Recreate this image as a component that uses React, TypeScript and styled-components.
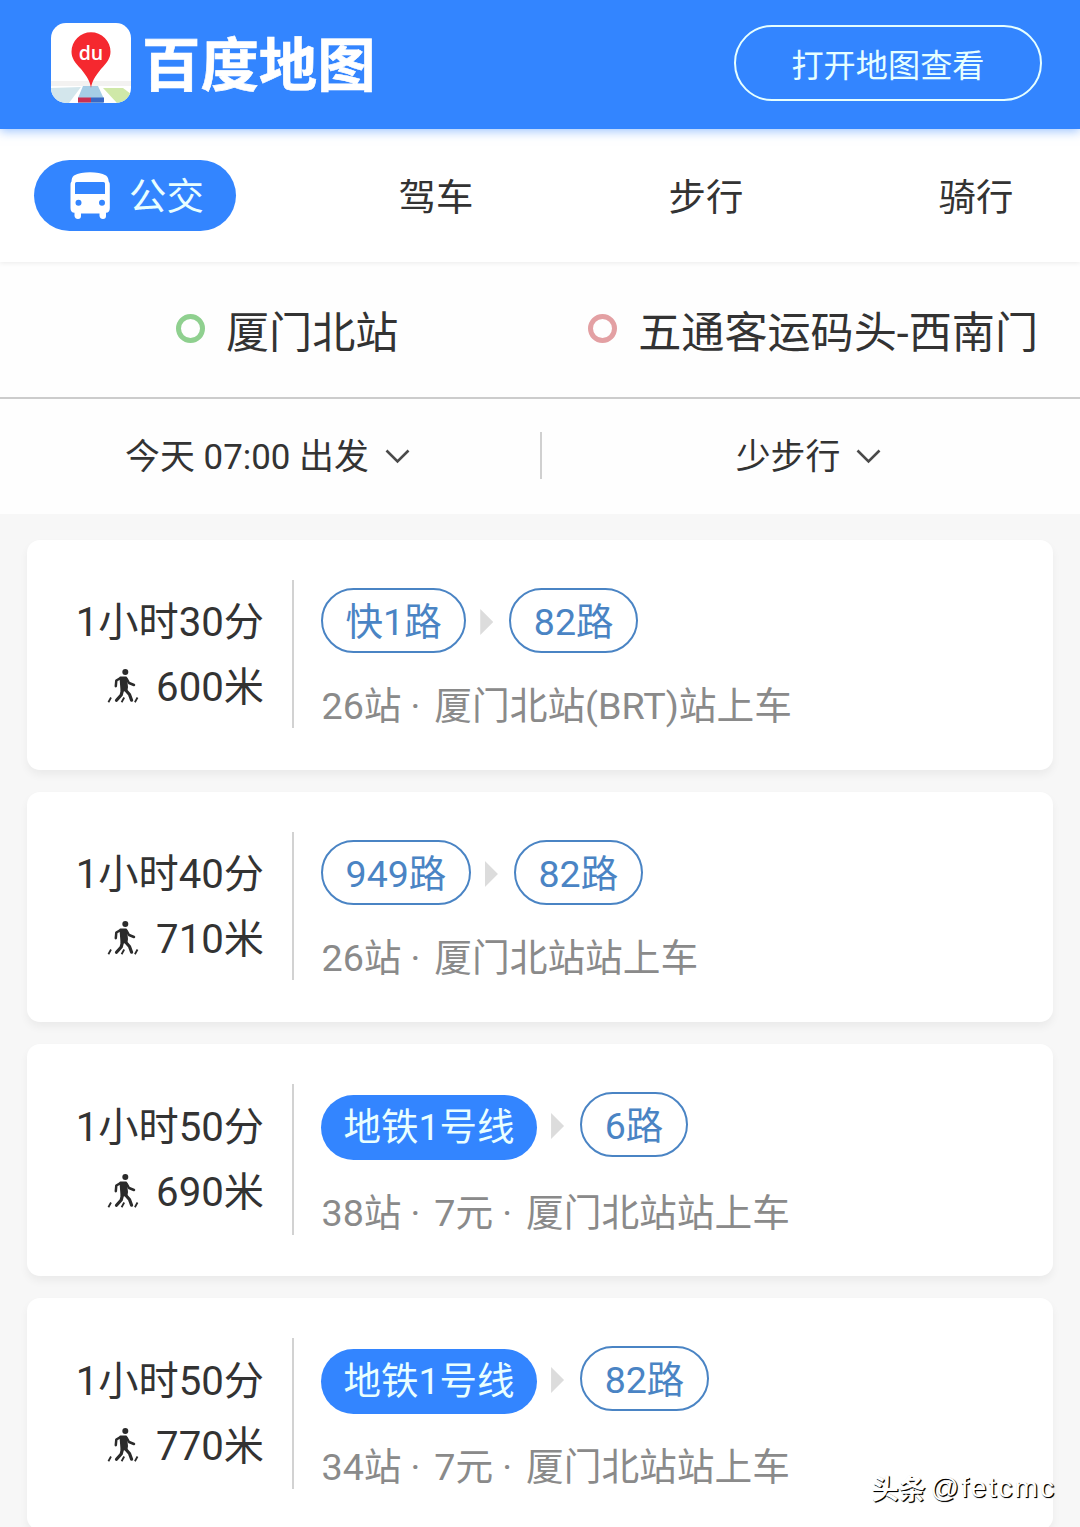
import React from 'react';
import styled, { createGlobalStyle, css } from 'styled-components';

const BLUE = '#3385ff';
const LINE_BLUE = '#4a84c4';

const GlobalStyle = createGlobalStyle`
  * { box-sizing: border-box; }
  body {
    margin: 0;
    background: #f7f7f7;
    color: #333;
    font-family: Roboto, "Noto Sans CJK SC", sans-serif;
    font-weight: 400;
  }
`;

const Page = styled.div`
  position: relative;
  width: 1080px;
  height: 1527px;
  overflow: hidden;
  display: flex;
  flex-direction: column;
`;

const Header = styled.header`
  display: flex;
  justify-content: space-between;
  height: 129px;
  flex: none;
  padding: 23px 38px 0 51px;
  background: ${BLUE};
  box-shadow: 0 2px 10px rgba(51, 133, 255, 0.5);
  z-index: 2;
`;

const Brand = styled.div`
  display: flex;
  gap: 11px;
`;

const BrandName = styled.h1`
  margin: 0;
  color: #fff;
  font-family: "Noto Sans CJK SC", sans-serif;
  font-weight: 700;
  font-size: 58.4px;
  line-height: 75px;
  white-space: nowrap;
  -webkit-text-stroke: 0.6px #fff;
`;

const OpenButton = styled.button`
  width: 308px;
  height: 76px;
  margin-top: 2px;
  padding: 5px 0 0;
  border: 2px solid #e6ffff;
  border-radius: 38px;
  background: transparent;
  color: #e6ffff;
  font: inherit;
  font-size: 32.2px;
  line-height: 40px;
`;

const Tabs = styled.nav`
  display: grid;
  grid-template-columns: repeat(4, 1fr);
  justify-items: center;
  align-items: center;
  height: 133px;
  flex: none;
  background: #fff;
  box-shadow: 0 1px 5px rgba(0, 0, 0, 0.08);
  z-index: 1;
`;

const Tab = styled.div<{ $active?: boolean }>`
  display: flex;
  align-items: center;
  gap: ${p => (p.$active ? 19 : 18.5)}px;
  width: 202px;
  height: 71px;
  padding-left: 36px;
  border-radius: 36px;
  font-size: 37.4px;
  line-height: 50px;
  color: ${p => (p.$active ? '#e9ffff' : '#333')};
  background: ${p => (p.$active ? BLUE : 'transparent')};
  svg { visibility: ${p => (p.$active ? 'visible' : 'hidden')}; }
  span { padding-top: ${p => (p.$active ? 2 : 4)}px; }
`;

const Places = styled.section`
  display: flex;
  justify-content: space-between;
  height: 137px;
  flex: none;
  padding: 40px 42px 0 176px;
  background: #fefefe;
  border-bottom: 2px solid #ccc;
`;

const Place = styled.div`
  display: flex;
  gap: 21px;
  font-size: 43.1px;
  line-height: 56px;
  span { padding-top: 4px; }
`;

const Ring = styled.i<{ $color: string }>`
  width: 29px;
  height: 29px;
  margin-top: 12px;
  border: 5px solid ${p => p.$color};
  border-radius: 50%;
`;

const Filters = styled.section`
  display: grid;
  grid-template-columns: 1fr 1fr;
  height: 115px;
  flex: none;
  background: #fefefe;
`;

const Filter = styled.div<{ $divided?: boolean }>`
  display: flex;
  justify-content: center;
  align-items: center;
  gap: 16px;
  height: 47px;
  margin-top: 33px;
  font-size: 34.9px;
  line-height: 46px;
  span { padding-top: 4px; }
  svg { margin-top: 2px; }
  ${p => p.$divided && css`border-right: 2px solid #d0d0d0; padding-right: 5px; width: 542px;`}
  ${p => !p.$divided && css`padding-right: 5px;`}
`;

const Routes = styled.main`
  display: flex;
  flex-direction: column;
  gap: 22px;
  padding: 26px 27px 0;
`;

const Card = styled.article<{ $tall?: boolean }>`
  display: flex;
  height: ${p => (p.$tall ? 232 : 230)}px;
  flex: none;
  padding: 40px 27px;
  border-radius: 13px;
  background: #fff;
  box-shadow: 0 5px 8px rgba(0, 0, 0, 0.05);
`;

const Summary = styled.div<{ $tall?: boolean }>`
  display: flex;
  flex-direction: column;
  align-items: flex-end;
  gap: 15px;
  width: 240px;
  height: ${p => (p.$tall ? 151 : 148)}px;
  padding: ${p => (p.$tall ? 19 : 18)}px 28px 0 0;
  border-right: 2px solid #d2d2d2;
  font-size: 40.2px;
  line-height: 50px;
  white-space: nowrap;
`;

const Walk = styled.div`
  display: flex;
  align-items: center;
  gap: 17px;
  svg { margin-top: -4px; }
`;

const Detail = styled.div`
  display: flex;
  flex-direction: column;
  padding-left: 27px;
  white-space: nowrap;
`;

const Lines = styled.div`
  display: flex;
  align-items: flex-start;
  height: 65px;
  margin-top: 8px;
  font-size: 37.5px;
`;

const Line = styled.span<{ $metro?: boolean }>`
  height: 65px;
  padding: ${p => (p.$metro ? '0 22.5px' : '0 22.6px')};
  border-radius: 33px;
  line-height: 65px;
  ${p => p.$metro
    ? css`background: ${BLUE}; color: #e9ffff; margin-top: 3px;`
    : css`border: 2px solid ${LINE_BLUE}; color: ${LINE_BLUE};`}
`;

const Arrow = styled.i`
  width: 13px;
  height: 26px;
  margin: 21px 16px 0 14px;
  background: #dcdcdc;
  clip-path: polygon(0 0, 100% 50%, 0 100%);
`;

const Meta = styled.div<{ $tall?: boolean }>`
  display: flex;
  margin-top: ${p => (p.$tall ? 31 : 28)}px;
  padding-left: 0.5px;
  font-size: 37.7px;
  line-height: 50px;
  color: #8a8a8a;
`;

const Dot = styled.span`
  width: 32.8px;
  padding-right: 5px;
  text-align: center;
`;

const Watermark = styled.div`
  position: absolute;
  right: 24px;
  bottom: 19px;
  display: flex;
  gap: 5px;
  color: #fff;
  font-family: "Liberation Sans", "Noto Sans CJK SC", sans-serif;
  font-size: 28px;
  line-height: 40px;
  text-shadow: 1px 1px 1px #000, 1px 1px 0 #000;
  z-index: 3;
`;

const WatermarkSite = styled.span`
  font-family: "Noto Sans CJK SC", sans-serif;
  font-size: 27px;
  font-weight: 700;
`;

const WatermarkUser = styled.span`
  letter-spacing: 2.1px;
`;

const LogoDu = styled.text`
  font-family: "Open Sans", sans-serif;
  font-size: 19.5px;
  font-weight: 600;
`;

const Logo = () => (
  <svg width="80" height="80" viewBox="0 0 80 80">
    <defs>
      <clipPath id="tile"><rect width="80" height="80" rx="15" /></clipPath>
    </defs>
    <g clipPath="url(#tile)">
      <rect width="80" height="80" fill="#fff" />
      <path d="M0 58H80V63H0Z" fill="#f3f2f1" />
      <path d="M0 65L30 64L18 80H0Z" fill="#d3e6ec" />
      <path d="M52 65L72 65L80 71V76L72 80H66Z" fill="#cfe8a8" />
      <path d="M32 63H47L53 76L52 80H27V75Z" fill="#a5cde6" />
      <path d="M27 74.500H40V79.500H27Z" fill="#c93052" />
      <path d="M40 74.500H53V79.500H40Z" fill="#3a68c4" />
      <path d="M40 65C39 58 36 53.500 30 46C24 40 20.500 35 20.500 28.800A19.500 19.500 0 0 1 59.500 28.800C59.500 35 56 40 50 46C44 53.500 41 58 40 65Z" fill="#f5282f" />
    </g>
    <LogoDu x="40" y="36.500" textAnchor="middle" fill="#fff">du</LogoDu>
  </svg>
);

const BusIcon = () => (
  <svg width="40" height="48" viewBox="0 0 40 48">
    <path
      fillRule="evenodd"
      fill="#fff"
      d="M4 3.500C8 1 14 .300 20 .300S32 1 36 3.500C38 5 38.500 7 38.700 9.500Q40 10.500 39.800 13V36Q39.800 40.500 36 40.800V44Q36 47 33 47T29.500 44V41.500H11V44Q11 47 8 47T4.500 44V40.800Q.500 40.500.500 36V13Q.300 10.500 1.500 9.500C1.700 7 2 5 4 3.500ZM6.500 10Q5 10 5 11.500V22H35V11.500Q35 10 33.500 10ZM8.500 27.700A3 3 0 1 0 8.500 33.700A3 3 0 1 0 8.500 27.700ZM32 27.700A3 3 0 1 0 32 33.700A3 3 0 1 0 32 27.700Z"
    />
  </svg>
);

const ChevronIcon = () => (
  <svg width="25" height="15" viewBox="0 0 25 15">
    <path d="M1.500 1.500L12.500 12.500L23.500 1.500" fill="none" stroke="#4a4a4a" strokeWidth="2.600" />
  </svg>
);

const WalkIcon = () => (
  <svg width="32" height="36" viewBox="0 0 32 36" fill="none" stroke="#2b2b2b" strokeLinecap="round" strokeLinejoin="round">
    <circle cx="18.300" cy="4" r="3" fill="#2b2b2b" stroke="none" />
    <path d="M13.500 9.500H19L20 19L19.500 22L14.500 22.500Z" fill="#2b2b2b" strokeWidth="2" />
    <path d="M13.500 10.200L9.300 12.500L8.800 18.200" strokeWidth="2.500" />
    <path d="M19.500 10.500L22 15L27 17" strokeWidth="2.500" />
    <path d="M15.500 22L14.200 27L9.500 32.200" strokeWidth="3.200" />
    <path d="M18.500 22L22.500 26.500L24.600 32.200" strokeWidth="3.200" />
    <path d="M4 29.500L1.400 34.300M17.200 29.500L14.600 34.300M30.500 29.500L27.900 34.300" strokeWidth="1.800" strokeLinecap="butt" />
  </svg>
);

type RouteLine = { name: string; metro?: boolean };
type Route = { time: string; walk: string; lines: RouteLine[]; meta: string[]; tall?: boolean };

const routes: Route[] = [
  { time: '1小时30分', walk: '600米', lines: [{ name: '快1路' }, { name: '82路' }], meta: ['26站', '厦门北站(BRT)站上车'] },
  { time: '1小时40分', walk: '710米', lines: [{ name: '949路' }, { name: '82路' }], meta: ['26站', '厦门北站站上车'] },
  { time: '1小时50分', walk: '690米', lines: [{ name: '地铁1号线', metro: true }, { name: '6路' }], meta: ['38站', '7元', '厦门北站站上车'], tall: true },
  { time: '1小时50分', walk: '770米', lines: [{ name: '地铁1号线', metro: true }, { name: '82路' }], meta: ['34站', '7元', '厦门北站站上车'], tall: true },
];

const RouteCard = ({ route }: { route: Route }) => (
  <Card $tall={route.tall}>
    <Summary $tall={route.tall}>
      <div>{route.time}</div>
      <Walk><WalkIcon /><span>{route.walk}</span></Walk>
    </Summary>
    <Detail>
      <Lines>
        {route.lines.map((line, i) => (
          <React.Fragment key={line.name}>
            {i > 0 && <Arrow />}
            <Line $metro={line.metro}>{line.name}</Line>
          </React.Fragment>
        ))}
      </Lines>
      <Meta $tall={route.tall}>
        {route.meta.map((part, i) => (
          <React.Fragment key={part}>
            {i > 0 && <Dot>·</Dot>}
            <span>{part}</span>
          </React.Fragment>
        ))}
      </Meta>
    </Detail>
  </Card>
);

const App = () => (
  <Page>
    <GlobalStyle />
    <Header>
      <Brand><Logo /><BrandName>百度地图</BrandName></Brand>
      <OpenButton>打开地图查看</OpenButton>
    </Header>
    <Tabs>
      {['公交', '驾车', '步行', '骑行'].map((name, i) => (
        <Tab key={name} $active={i === 0}><BusIcon /><span>{name}</span></Tab>
      ))}
    </Tabs>
    <Places>
      <Place><Ring $color="#8fd08f" /><span>厦门北站</span></Place>
      <Place><Ring $color="#e3a0a3" /><span>五通客运码头-西南门</span></Place>
    </Places>
    <Filters>
      <Filter $divided><span>今天 07:00 出发</span><ChevronIcon /></Filter>
      <Filter><span>少步行</span><ChevronIcon /></Filter>
    </Filters>
    <Routes>
      {routes.map((route, i) => <RouteCard key={i} route={route} />)}
    </Routes>
    <Watermark><WatermarkSite>头条</WatermarkSite><WatermarkUser>@fetcmc</WatermarkUser></Watermark>
  </Page>
);

export default App;
